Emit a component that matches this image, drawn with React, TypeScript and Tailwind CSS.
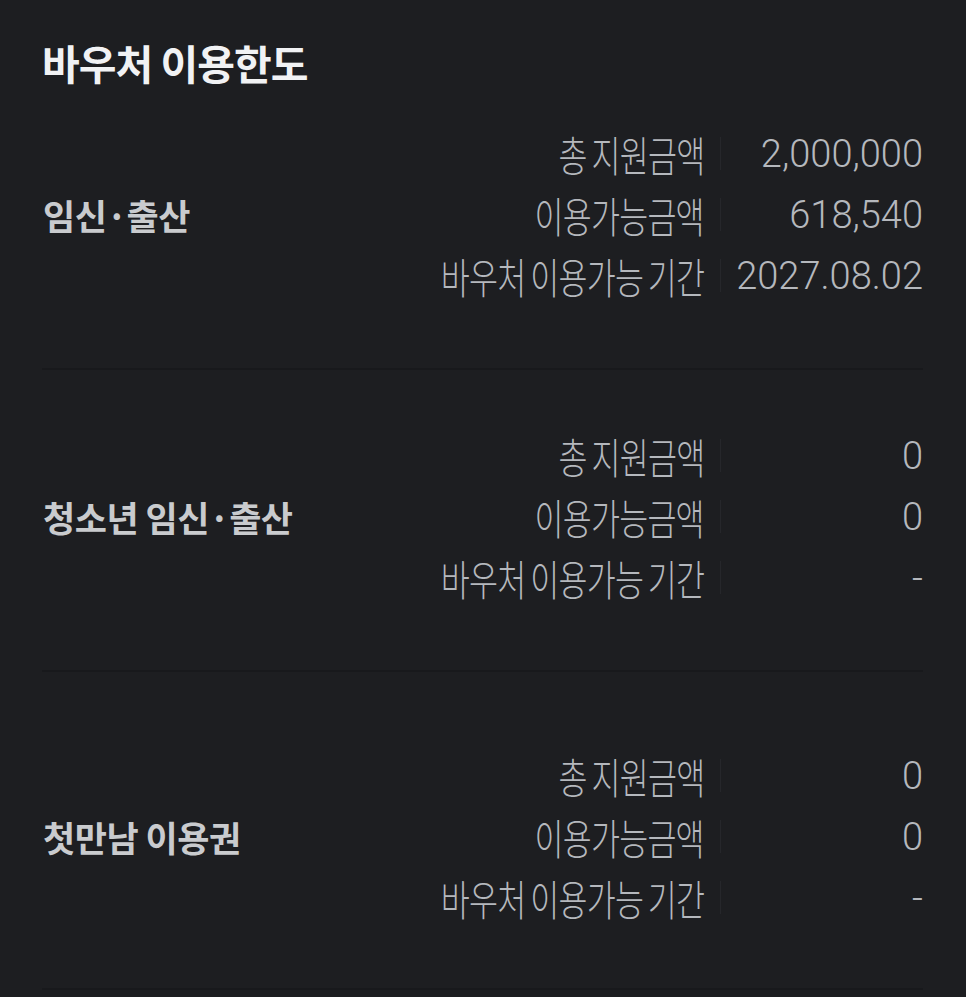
import React from "react";

type Row = { label: string; value: string };
type Section = { title: string; rows: Row[]; pt: string; pb: string };

const rowsOf = (a: string, b: string, c: string): Row[] => [
  { label: "총 지원금액", value: a },
  { label: "이용가능금액", value: b },
  { label: "바우처 이용가능 기간", value: c },
];

const sections: Section[] = [
  { title: "임신·출산", rows: rowsOf("2,000,000", "618,540", "2027.08.02"), pt: "pt-[40px]", pb: "pb-[62px]" },
  { title: "청소년 임신·출산", rows: rowsOf("0", "0", "-"), pt: "pt-[55px]", pb: "pb-[62px]" },
  { title: "첫만남 이용권", rows: rowsOf("0", "0", "-"), pt: "pt-[73px]", pb: "pb-[60px]" },
];

const cjk = "font-['Noto_Sans_CJK_KR','Noto_Sans',sans-serif]";

function SectionBlock({ s }: { s: Section }) {
  return (
    <div className={`${s.pt} ${s.pb} border-b-2 border-[#18191c] flex items-center`}>
      <div
        className={`${cjk} flex-1 text-[35px] font-bold tracking-[-0.5px] text-[#c9cbce] leading-none pl-[1px]`}
      >
        {s.title}
      </div>
      <div className="flex flex-col">
        {s.rows.map((r, i) => (
          <div key={i} className="h-[61px] flex items-center justify-end">
            <span
              className={`${cjk} inline-block origin-right scale-x-[0.75] text-[42px] font-light tracking-[-1px] [word-spacing:-2px] text-[#b5b8bd] leading-none whitespace-nowrap`}
            >
              {r.label}
            </span>
            <span className="ml-[16px] w-px h-[33px] bg-[#26272b]" />
            <span className="w-[202px] text-right font-['Roboto',sans-serif] font-light text-[38px] text-[#b5b8bd] leading-none">
              {r.value}
            </span>
          </div>
        ))}
      </div>
    </div>
  );
}

export default function App() {
  return (
    <div className="min-h-[997px] w-full bg-[#1d1e21] px-[42px] pr-[43px]">
      <h1
        className={`${cjk} pt-[42px] text-[41px] font-bold tracking-[-1px] text-[#f1f2f4] leading-none`}
      >
        바우처 이용한도
      </h1>
      {sections.map((s, i) => (
        <SectionBlock key={i} s={s} />
      ))}
    </div>
  );
}
